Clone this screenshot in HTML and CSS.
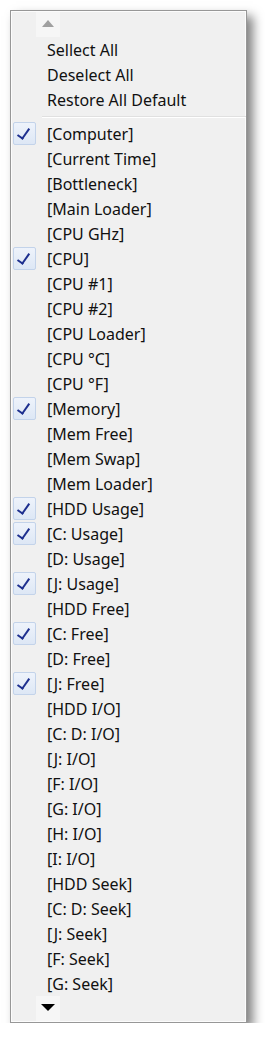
FILE: index.html
```html
<!DOCTYPE html>
<html lang="en">

<head>
    <meta charset="UTF-8">
    <meta name="viewport" content="width=device-width, initial-scale=1.0">
    <title>Menu</title>
    <link rel="stylesheet" href="styles.css">
</head>

<body>

    <div class="menu">
        <div class="scroll scroll-up">
            <span class="scroll-btn"><span class="arrow-up"></span></span>
        </div>

        <div class="item">Sellect All</div>
        <div class="item">Deselect All</div>
        <div class="item">Restore All Default</div>

        <div class="separator"></div>

        <div class="item checked">[Computer]</div>
        <div class="item">[Current Time]</div>
        <div class="item">[Bottleneck]</div>
        <div class="item">[Main Loader]</div>
        <div class="item">[CPU GHz]</div>
        <div class="item checked">[CPU]</div>
        <div class="item">[CPU #1]</div>
        <div class="item">[CPU #2]</div>
        <div class="item">[CPU Loader]</div>
        <div class="item">[CPU °C]</div>
        <div class="item">[CPU °F]</div>
        <div class="item checked">[Memory]</div>
        <div class="item">[Mem Free]</div>
        <div class="item">[Mem Swap]</div>
        <div class="item">[Mem Loader]</div>
        <div class="item checked">[HDD Usage]</div>
        <div class="item checked">[C: Usage]</div>
        <div class="item">[D: Usage]</div>
        <div class="item checked">[J: Usage]</div>
        <div class="item">[HDD Free]</div>
        <div class="item checked">[C: Free]</div>
        <div class="item">[D: Free]</div>
        <div class="item checked">[J: Free]</div>
        <div class="item">[HDD I/O]</div>
        <div class="item">[C: D: I/O]</div>
        <div class="item">[J: I/O]</div>
        <div class="item">[F: I/O]</div>
        <div class="item">[G: I/O]</div>
        <div class="item">[H: I/O]</div>
        <div class="item">[I: I/O]</div>
        <div class="item">[HDD Seek]</div>
        <div class="item">[C: D: Seek]</div>
        <div class="item">[J: Seek]</div>
        <div class="item">[F: Seek]</div>
        <div class="item">[G: Seek]</div>

        <div class="scroll scroll-down">
            <span class="scroll-btn"><span class="arrow-down"></span></span>
        </div>
    </div>

</body>

</html>
```

FILE: styles.css
```css
body {
    margin: 0;
    padding: 10px 0 0 10px;
    background-color: #fff;
    font-family: "Noto Sans", "Open Sans", sans-serif;
}

.menu {
    width: 237px;
    height: 1013px;
    box-sizing: border-box;
    border: 1px solid #979797;
    background-color: #f0f0f0;
    box-shadow: inset 0 0 0 1px #fcfcfc, 6px 6px 10px rgba(0, 0, 0, 0.5);
    display: flex;
    flex-direction: column;
}

.scroll {
    height: 25px;
    display: flex;
    padding-left: 25px;
}

.scroll-up {
    height: 26px;
    padding-top: 1px;
    box-sizing: border-box;
}

.scroll-down {
    padding-bottom: 1px;
}

.scroll-btn {
    width: 24px;
    display: flex;
    align-items: center;
    justify-content: center;
    background-color: #f6f6f6;
}

.arrow-up {
    width: 0;
    height: 0;
    border-left: 6px solid transparent;
    border-right: 6px solid transparent;
    border-bottom: 7px solid #a0a0a0;
    margin-top: -2px;
}

.arrow-down {
    width: 0;
    height: 0;
    border-left: 7px solid transparent;
    border-right: 7px solid transparent;
    border-top: 7px solid #000;
    margin-top: -2px;
}

.item {
    position: relative;
    height: 25px;
    line-height: 26px;
    padding-left: 36px;
    font-size: 16px;
    color: #111;
    white-space: nowrap;
}

.checked::before {
    content: "";
    position: absolute;
    left: 2px;
    top: 1px;
    width: 21px;
    height: 21px;
    border: 1px solid #c3d3ea;
    border-radius: 2px;
    background: linear-gradient(#eef3fb, #dde7f5);
}

.checked::after {
    content: "";
    position: absolute;
    left: 9px;
    top: 5px;
    width: 5px;
    height: 11px;
    border-right: 2px solid #1d2f8f;
    border-bottom: 2px solid #1d2f8f;
    transform: rotate(35deg);
}

.separator {
    height: 9px;
    margin-left: 31px;
    box-sizing: border-box;
    padding-top: 4px;
}

.separator::before {
    content: "";
    display: block;
    height: 1px;
    background-color: #e0e0e0;
    border-bottom: 1px solid #fff;
}
```
